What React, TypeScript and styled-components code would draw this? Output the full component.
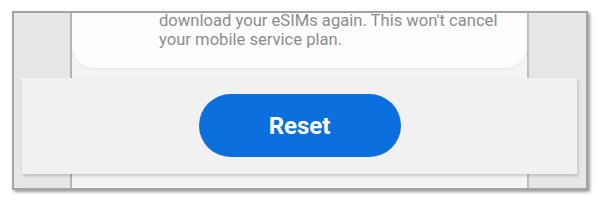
import React from "react";
import styled, { createGlobalStyle } from "styled-components";

const Global = createGlobalStyle`
  html, body { margin: 0; padding: 0; background: #ffffff; }
  body { width: 600px; height: 204px; overflow: hidden; font-family: Roboto, "Liberation Sans", sans-serif; }
`;

const Page = styled.div`
  padding: 11px 0 0 12px;
`;

const Frame = styled.div`
  position: relative;
  width: 572px;
  height: 175px;
  border: 2px solid #a3a3a3;
  box-shadow: 2px 2px 3px rgba(0, 0, 0, 0.4);
  display: flex;
  overflow: hidden;
  background: #f3f3f3;
`;

const Strip = styled.div<{ $side: "left" | "right" }>`
  width: ${(p) => (p.$side === "left" ? "56px" : "57px")};
  flex: none;
  background: #e6e6e6;
  ${(p) =>
    p.$side === "left"
      ? "border-right: 2px solid #b3b3b3;"
      : "border-left: 2px solid #bdbdbd;"}
`;

const Center = styled.div`
  flex: 1;
  background: #f4f4f4;
  overflow: hidden;
`;

const Card = styled.div`
  background: #fdfdfd;
  height: 55px;
  border-radius: 0 0 22px 22px;
  box-shadow: 0 1px 2px rgba(0, 0, 0, 0.06);
  padding-left: 87px;
  overflow: hidden;
`;

const Body = styled.p`
  margin: -2px 0 0;
  font-family: Roboto, "Liberation Sans", sans-serif;
  font-size: 16.6px;
  line-height: 19px;
  color: #8c8c8c;
`;

const Panel = styled.div`
  position: absolute;
  left: 8px;
  top: 65px;
  width: 555px;
  height: 96px;
  background: #f1f1f1;
  box-shadow: 1px 2px 3px rgba(0, 0, 0, 0.18);
  display: flex;
  align-items: center;
  justify-content: center;
`;

const ResetButton = styled.button`
  width: 202px;
  height: 63px;
  margin-top: -1px;
  border: none;
  border-radius: 32px;
  background: #0b6fdd;
  color: #ffffff;
  font-family: Roboto, "Liberation Sans", sans-serif;
  font-weight: 700;
  font-size: 24px;
  cursor: pointer;
`;

export default function App() {
  return (
    <>
      <Global />
      <Page>
        <Frame>
          <Strip $side="left" />
          <Center>
            <Card>
              <Body>
                download your eSIMs again. This won't cancel
                <br />
                your mobile service plan.
              </Body>
            </Card>
          </Center>
          <Strip $side="right" />
          <Panel>
            <ResetButton>Reset</ResetButton>
          </Panel>
        </Frame>
      </Page>
    </>
  );
}
